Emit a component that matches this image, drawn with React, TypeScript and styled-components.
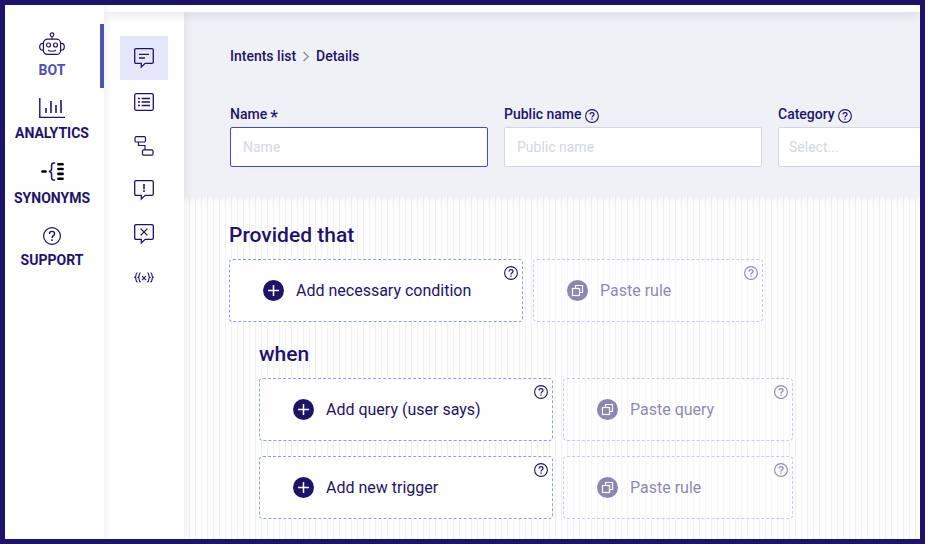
import React from 'react';
import styled, { createGlobalStyle, css } from 'styled-components';

const navy = '#1e136b';
const indigo = '#4f52b2';

const GlobalStyle = createGlobalStyle`
  *, *::before, *::after { box-sizing: border-box; }
  body {
    margin: 0;
    font-family: Roboto, "Liberation Sans", sans-serif;
    color: ${navy};
    background: #fefefe;
  }
  button, input, select { font: inherit; color: inherit; }
`;

const Frame = styled.div`
  display: flex;
  min-height: 100vh;
  border: 5px solid ${navy};
  overflow: hidden;
`;

const Sidebar = styled.nav`
  flex: none;
  width: 99px;
  padding-top: 19px;
  background: #fefefe;
  box-shadow: 0 0 8px rgba(30, 19, 107, 0.1);
  position: relative;
  z-index: 3;
`;

const SidebarLink = styled.a<{ $active?: boolean }>`
  display: flex;
  flex-direction: column;
  align-items: center;
  height: 64px;
  padding-top: 8px;
  gap: 5px;
  font-size: 14px;
  line-height: 18px;
  font-weight: 700;
  text-decoration: none;
  color: ${(p) => (p.$active ? indigo : navy)};
  ${(p) =>
    p.$active &&
    css`
      box-shadow: inset -4px 0 0 ${indigo};
    `}
  svg { display: block; }
`;

const SidebarLabel = styled.span`
  margin-right: 5px;
`;

const SidebarIcon = styled.span`
  margin-right: 5px;
  color: ${navy};
`;

const Workspace = styled.div`
  flex: 1;
  min-width: 0;
  display: flex;
  flex-direction: column;
`;

const TopBar = styled.header`
  height: 7px;
  background: #fff;
  box-shadow: 0 1px 12px rgba(40, 35, 80, 0.16);
  position: relative;
  z-index: 2;
`;

const Columns = styled.div`
  flex: 1;
  display: flex;
`;

const SubNav = styled.nav`
  flex: none;
  width: 80px;
  padding: 24px 16px 0;
  background: #fefefe;
  box-shadow: 0 0 10px rgba(40, 35, 80, 0.1);
  position: relative;
  z-index: 1;
`;

const SubNavLink = styled.a<{ $active?: boolean }>`
  display: flex;
  align-items: center;
  justify-content: center;
  height: 44px;
  color: ${navy};
  background: ${(p) => (p.$active ? '#e4e7fa' : 'transparent')};
`;

const Main = styled.main`
  flex: 1;
  min-width: 0;
  overflow: hidden;
  background: repeating-linear-gradient(to right, #fefefe 0 5px, #f0f0f1 5px 6px);
`;

const Details = styled.section`
  padding: 34px 0 30px 46px;
  background: #f0f1f6;
  box-shadow: 0 2px 8px rgba(40, 35, 80, 0.07);
`;

const Breadcrumb = styled.div`
  display: flex;
  align-items: center;
  gap: 6px;
  font-size: 14px;
  line-height: 20px;
  font-weight: 500;
  a { color: inherit; text-decoration: none; }
  svg { color: #8a86a3; }
`;

const Fields = styled.div`
  display: flex;
  gap: 16px;
  margin-top: 38px;
`;

const Field = styled.div`
  flex: 1 0 258px;
`;

const LabelRow = styled.div`
  display: flex;
  align-items: center;
  gap: 3px;
  height: 20px;
  margin-bottom: 3px;
  font-size: 14px;
  line-height: 20px;
  font-weight: 500;
`;

const RequiredMark = styled.span`
  padding-top: 6px;
  font-size: 18px;
  font-weight: 400;
`;

const controlStyle = css`
  display: block;
  width: 100%;
  height: 40px;
  border: 1px solid #d3d6e2;
  border-radius: 2px;
  background: #fff;
  font-size: 14px;
  outline: none;
`;

const TextInput = styled.input<{ $focused?: boolean }>`
  ${controlStyle}
  padding: 0 12px;
  border-color: ${(p) => (p.$focused ? '#4543dc' : '#d3d6e2')};
  &::placeholder { color: #d3d7e2; opacity: 1; }
`;

const Select = styled.select`
  ${controlStyle}
  appearance: none;
  padding: 0 10px;
  color: #d3d7e2;
`;

const HelpButton = styled.button`
  display: block;
  width: 14px;
  height: 14px;
  padding: 0;
  border: 0;
  background: none;
  svg { display: block; }
`;

const LabelHelp = styled(HelpButton)`
  margin-top: 4px;
`;

const CardHelp = styled(HelpButton)`
  position: absolute;
  top: 6px;
  right: 4px;
`;

const Rules = styled.section`
  padding: 25px 20px 20px 45px;
`;

const Group = styled.div`
  display: flex;
  flex-direction: column;
  gap: 15px;
`;

const Nested = styled(Group)`
  margin-top: 19px;
  padding-left: 30px;
`;

const Heading = styled.h2`
  margin: 0;
  margin-bottom: -4px;
  font-size: 21px;
  line-height: 26px;
  font-weight: 500;
`;

const CardRow = styled.div`
  display: flex;
  gap: 10px;
`;

const Card = styled.div<{ $muted?: boolean }>`
  position: relative;
  flex: none;
  width: ${(p) => (p.$muted ? 230 : 294)}px;
  height: 63px;
  border: 1px dashed #8b9ee6;
  border-radius: 4px;
  background: #fefefe;
  opacity: ${(p) => (p.$muted ? 0.5 : 1)};
`;

const CardButton = styled.button`
  display: flex;
  align-items: center;
  gap: 12px;
  width: 100%;
  height: 100%;
  padding: 0 0 0 33px;
  border: 0;
  background: none;
  font-size: 16px;
  text-align: left;
`;

const HelpIcon = () => (
  <svg width="14" height="14" viewBox="0 0 14 14" fill="none" stroke="currentColor" strokeWidth="1.1">
    <circle cx="7" cy="7" r="6.4" />
    <path d="M5 5.6C5 4.4 5.8 3.7 7 3.7s2 .7 2 1.7c0 1.4-2 1.4-2 3" strokeWidth="1.2" />
    <path d="M7 9.4v1.3" strokeWidth="1.3" />
  </svg>
);

const RobotIcon = () => (
  <svg width="26" height="24" viewBox="0 0 26 24" fill="none" stroke="currentColor" strokeWidth="1.2">
    <circle cx="13" cy="2.7" r="1.8" />
    <path d="M13 4.5v2.7" />
    <rect x="4.4" y="7.2" width="17.2" height="15.2" rx="4" />
    <path d="M4.4 11.4H3.6C1.8 11.4.7 12.9.7 14.8s1.1 3.4 2.9 3.4h.8M21.6 11.4h.8c1.8 0 2.9 1.5 2.9 3.4s-1.1 3.4-2.9 3.4h-.8" />
    <circle cx="9.5" cy="13" r="2" />
    <circle cx="16.5" cy="13" r="2" />
    <path d="M9 18.2c2 1.4 6 1.4 8 0" />
  </svg>
);

const ChartIcon = () => (
  <svg width="26" height="23" viewBox="0 0 26 23" fill="none" stroke="currentColor" strokeWidth="1.4">
    <path d="M.8 2v19.4H26" />
    <path d="M7 12v5M12 5v12M17 9v8M22 4v13" strokeWidth="1.6" />
  </svg>
);

const SynonymsIcon = () => (
  <svg width="24" height="24" viewBox="0 0 24 24" fill="none" stroke="#000" strokeWidth="2.6" strokeLinecap="round">
    <path d="M2.4 11.5h3.2M18.4 4.3h4.2M18.4 9h4.2M18.4 13.9h4.2M18.4 18.7h4.2" />
    <path
      d="M14.6 3h-.8c-1.8 0-2.2 1-2.2 2.3v3.4c0 1.7-.7 2.7-2.8 2.8 2.1.1 2.8 1.1 2.8 2.8v3.4c0 1.3.4 2.3 2.2 2.3h.8"
      stroke={navy}
      strokeWidth="1.5"
    />
  </svg>
);

const SupportIcon = () => (
  <svg width="24" height="22" viewBox="0 0 24 22" fill="none" stroke="currentColor" strokeWidth="1.2">
    <circle cx="12" cy="12" r="8.4" />
    <path d="M9.4 10c0-1.6 1-2.6 2.6-2.6s2.6 1 2.6 2.3c0 1.9-2.6 2-2.6 4.2" strokeWidth="1.4" />
    <path d="M12 15.2v1.7" strokeWidth="1.5" />
  </svg>
);

const Bubble = ({ children }: { children: React.ReactNode }) => (
  <svg width="20" height="22" viewBox="0 0 20 22" fill="none" stroke="currentColor" strokeWidth="1.3">
    <path d="M2 1.7h16c.8 0 1.3.5 1.3 1.3v12c0 .8-.5 1.3-1.3 1.3h-6.8L7.3 20v-3.7H2c-.8 0-1.3-.5-1.3-1.3V3c0-.8.5-1.3 1.3-1.3z" />
    {children}
  </svg>
);

const MessageIcon = () => (
  <Bubble>
    <path d="M5 7.3h10M5 11h6" />
  </Bubble>
);

const AlertIcon = () => (
  <Bubble>
    <path d="M10 5v5.2M10 11.3V13" strokeWidth="1.6" />
  </Bubble>
);

const CloseIcon = () => (
  <Bubble>
    <path d="M6.6 5.6l6.8 6.8M13.4 5.6l-6.8 6.8" />
  </Bubble>
);

const ListIcon = () => (
  <svg width="20" height="18" viewBox="0 0 20 18" fill="none" stroke="currentColor" strokeWidth="1.3">
    <rect x=".7" y=".7" width="18.6" height="16.6" rx="1.5" />
    <path d="M4 5.5h2M4 9h2M4 12.5h2M7.6 5.5H16M7.6 9H16M7.6 12.5H16" strokeWidth="1.5" />
  </svg>
);

const FlowIcon = () => (
  <svg width="20" height="20" viewBox="0 0 20 20" fill="none" stroke="currentColor" strokeWidth="1.2">
    <rect x="1" y=".7" width="10.5" height="5.3" rx="1.2" />
    <rect x="8.5" y="13.8" width="10.5" height="5.3" rx="1.2" />
    <path d="M4.5 6v3.5H11v4.3" />
  </svg>
);

const VariableIcon = () => (
  <svg width="20" height="12" viewBox="0 0 20 12" fill="none" stroke="currentColor" strokeWidth="1.1">
    <path d="M3.6.7c-1.3 0-1.5.8-1.5 2S2 4.800.7 5.300c1.300.5 1.400 1.400 1.400 2.600s.2 2 1.500 2" />
    <path d="M6.800.7c-1.300 0-1.500.8-1.500 2s-.1 2.100-1.200 2.600c1.100.5 1.200 1.400 1.200 2.600s.2 2 1.500 2" />
    <path d="M16.400.7c1.300 0 1.500.8 1.500 2s.1 2.100 1.400 2.600c-1.300.5-1.400 1.400-1.400 2.600s-.2 2-1.500 2" />
    <path d="M13.200.7c1.300 0 1.500.8 1.500 2s.1 2.100 1.200 2.600c-1.100.5-1.200 1.400-1.200 2.600s-.2 2-1.500 2" />
    <path d="M8 4.200l4 4M12 4.200l-4 4" />
  </svg>
);

const ChevronIcon = () => (
  <svg width="8" height="12" viewBox="0 0 8 12" fill="none" stroke="currentColor" strokeWidth="1.3">
    <path d="M1.5 2l4.800 4.500L1.500 11" />
  </svg>
);

const PlusIcon = () => (
  <svg width="21" height="21" viewBox="0 0 21 21">
    <circle cx="10.5" cy="10.5" r="10.5" fill={navy} />
    <path d="M10.5 5v11M5 10.5h11" stroke="#fff" strokeWidth="1.5" />
  </svg>
);

const CopyIcon = () => (
  <svg width="21" height="21" viewBox="0 0 21 21" fill="none" stroke="#fff" strokeWidth="1.2">
    <circle cx="10.5" cy="10.5" r="10.5" fill={navy} stroke="none" />
    <path d="M8.5 8V5.5h7v7H13" />
    <rect x="5.5" y="8.5" width="7" height="7" />
  </svg>
);

const sections = [
  { label: 'BOT', icon: <RobotIcon />, active: true },
  { label: 'ANALYTICS', icon: <ChartIcon /> },
  { label: 'SYNONYMS', icon: <SynonymsIcon /> },
  { label: 'SUPPORT', icon: <SupportIcon /> },
];

const tools = [
  { label: 'Intents', icon: <MessageIcon />, active: true },
  { label: 'Lists', icon: <ListIcon /> },
  { label: 'Flows', icon: <FlowIcon /> },
  { label: 'Alerts', icon: <AlertIcon /> },
  { label: 'Fallbacks', icon: <CloseIcon /> },
  { label: 'Variables', icon: <VariableIcon /> },
];

function ActionCard({ label, paste }: { label: string; paste?: boolean }) {
  return (
    <Card $muted={paste}>
      <CardButton type="button">
        {paste ? <CopyIcon /> : <PlusIcon />}
        {label}
      </CardButton>
      <CardHelp type="button" aria-label={`Help: ${label}`}>
        <HelpIcon />
      </CardHelp>
    </Card>
  );
}

function ActionRow({ add, paste }: { add: string; paste: string }) {
  return (
    <CardRow>
      <ActionCard label={add} />
      <ActionCard label={paste} paste />
    </CardRow>
  );
}

export default function App() {
  return (
    <>
      <GlobalStyle />
      <Frame>
        <Sidebar aria-label="Sections">
          {sections.map((s) => (
            <SidebarLink key={s.label} href="#" $active={s.active}>
              <SidebarIcon>{s.icon}</SidebarIcon>
              <SidebarLabel>{s.label}</SidebarLabel>
            </SidebarLink>
          ))}
        </Sidebar>
        <Workspace>
          <TopBar />
          <Columns>
            <SubNav aria-label="Bot tools">
              {tools.map((t) => (
                <SubNavLink key={t.label} href="#" aria-label={t.label} $active={t.active}>
                  {t.icon}
                </SubNavLink>
              ))}
            </SubNav>
            <Main>
              <Details>
                <Breadcrumb>
                  <a href="#">Intents list</a>
                  <ChevronIcon />
                  <span>Details</span>
                </Breadcrumb>
                <Fields>
                  <Field>
                    <LabelRow>
                      <label htmlFor="name">Name</label>
                      <RequiredMark>*</RequiredMark>
                    </LabelRow>
                    <TextInput id="name" placeholder="Name" required $focused />
                  </Field>
                  <Field>
                    <LabelRow>
                      <label htmlFor="public-name">Public name</label>
                      <LabelHelp type="button" aria-label="Help: Public name">
                        <HelpIcon />
                      </LabelHelp>
                    </LabelRow>
                    <TextInput id="public-name" placeholder="Public name" />
                  </Field>
                  <Field>
                    <LabelRow>
                      <label htmlFor="category">Category</label>
                      <LabelHelp type="button" aria-label="Help: Category">
                        <HelpIcon />
                      </LabelHelp>
                    </LabelRow>
                    <Select id="category" defaultValue="">
                      <option value="">Select...</option>
                    </Select>
                  </Field>
                </Fields>
              </Details>
              <Rules>
                <Group>
                  <Heading>Provided that</Heading>
                  <ActionRow add="Add necessary condition" paste="Paste rule" />
                </Group>
                <Nested>
                  <Heading>when</Heading>
                  <ActionRow add="Add query (user says)" paste="Paste query" />
                  <ActionRow add="Add new trigger" paste="Paste rule" />
                </Nested>
              </Rules>
            </Main>
          </Columns>
        </Workspace>
      </Frame>
    </>
  );
}
